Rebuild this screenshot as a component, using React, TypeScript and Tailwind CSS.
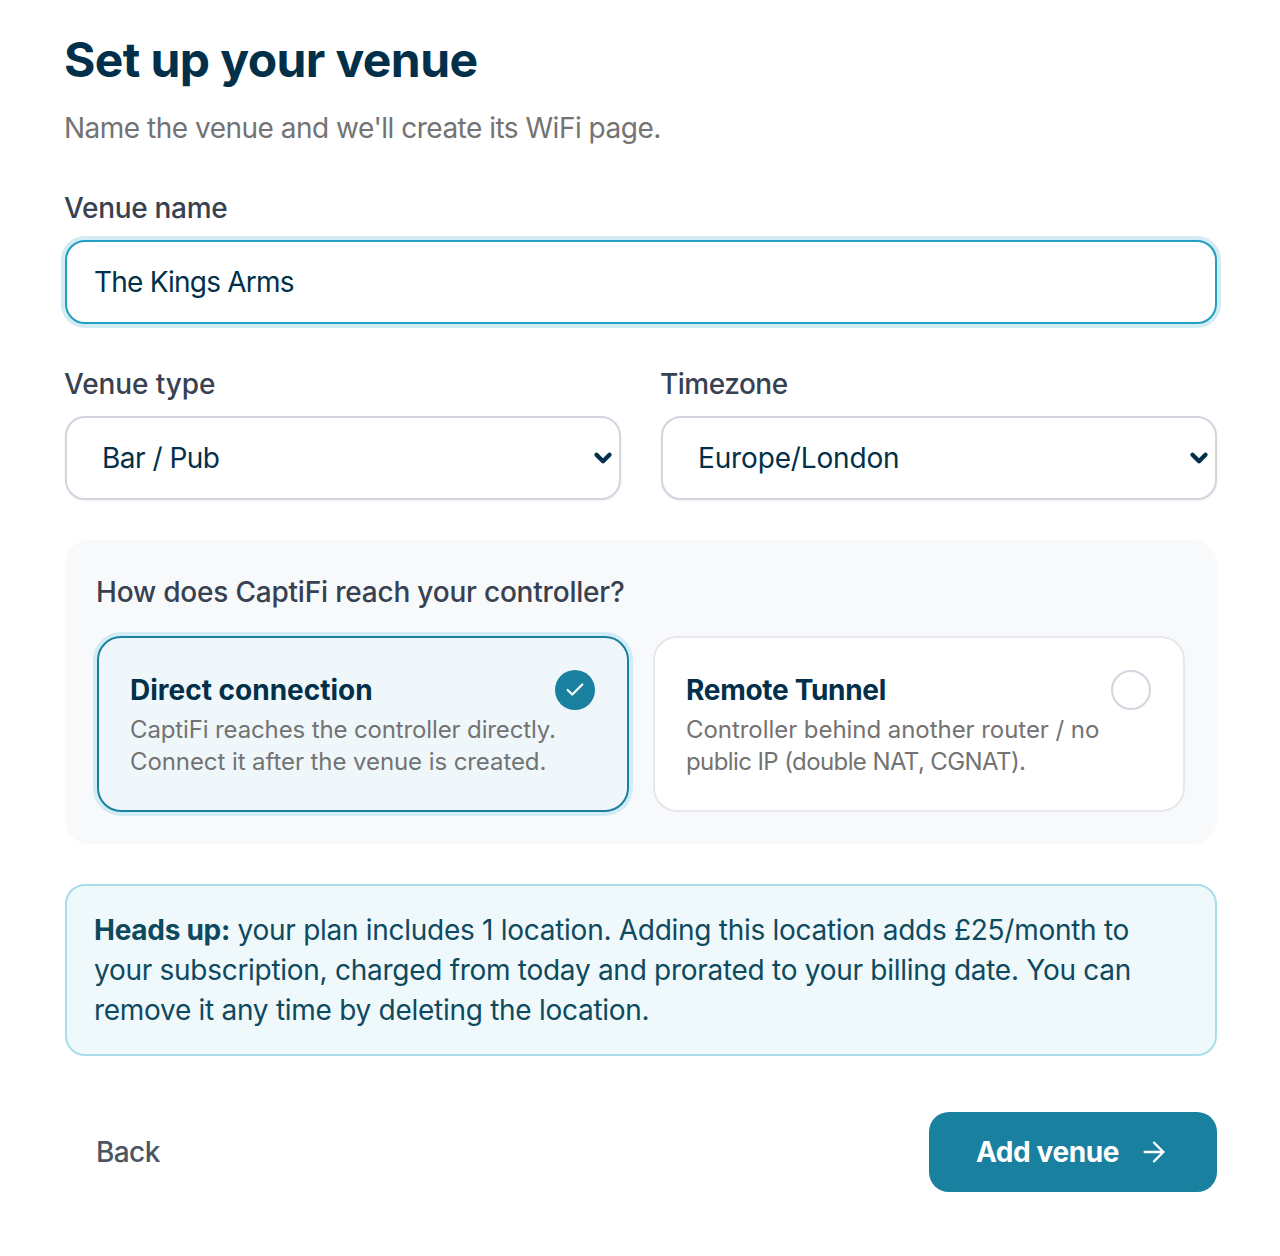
import { ArrowRight, Check, ChevronDown } from "lucide-react";

type CardLine = {
  text: string;
  spacing: string;
};

type OptionCardProps = {
  title: string;
  titleSpacing: string;
  lines: CardLine[];
  selected?: boolean;
};

function OptionCard({ title, titleSpacing, lines, selected }: OptionCardProps) {
  return (
    <div
      className={`relative flex-1 h-[176px] rounded-[24px] border-2 pl-[31px] pt-[34px] ${
        selected
          ? "bg-[#eff7fa] border-[#1a80a0] shadow-[0_0_0_4px_#d3ebf3]"
          : "bg-white border-[#e5e7eb]"
      }`}
    >
      <p className={`text-[28px] leading-[36px] font-bold text-[#02304a] mb-[6px] ${titleSpacing}`}>{title}</p>
      {lines.map((line) => (
        <p key={line.text} className={`text-[24px] leading-[32px] text-[#737373] whitespace-nowrap ${line.spacing}`}>
          {line.text}
        </p>
      ))}
      {selected ? (
        <span className="absolute right-[32px] top-[32px] w-[40px] h-[40px] rounded-full bg-[#1a80a0] flex items-center justify-center">
          <Check className="w-[22px] h-[22px] text-white" strokeWidth={2.4} />
        </span>
      ) : (
        <span className="absolute right-[32px] top-[32px] w-[40px] h-[40px] rounded-full border-2 border-[#d1d5e0]" />
      )}
    </div>
  );
}

type SelectFieldProps = {
  label: string;
  labelSpacing: string;
  value: string;
  spacing: string;
};

function SelectField({ label, labelSpacing, value, spacing }: SelectFieldProps) {
  return (
    <div className="flex-1">
      <label className={`block -ml-px text-[28px] leading-[36px] font-medium text-[#374151] mb-[14px] ${labelSpacing}`}>{label}</label>
      <div className="relative">
        <select
          defaultValue={value}
          className={`w-full h-[84px] appearance-none rounded-[20px] border-2 border-[#d1d5e0] bg-white pl-[35px] text-[28px] text-[#02304a] shadow-[0_1px_3px_rgba(0,0,0,0.06)] ${spacing}`}
        >
          <option>{value}</option>
        </select>
        <ChevronDown
          className="absolute right-[5px] top-[29px] w-[26px] h-[26px] text-[#02304a] pointer-events-none"
          strokeWidth={4}
        />
      </div>
    </div>
  );
}

export default function App() {
  return (
    <div className="bg-white min-h-[1256px] w-[1280px] pl-[65px] pr-[63px] pt-[28px] font-['Inter',sans-serif]">
      <h1 className="-ml-px text-[48px] leading-[64px] font-bold text-[#02304a] tracking-[-0.6px]">Set up your venue</h1>
      <p className="-ml-px mt-[20px] text-[28px] leading-[32px] text-[#737373] tracking-[-0.5px]">
        Name the venue and we'll create its WiFi page.
      </p>

      <label className="block -ml-px mt-[46px] text-[28px] leading-[36px] font-medium text-[#374151] tracking-[-0.3px]">Venue name</label>
      <input
        readOnly
        value="The Kings Arms"
        className="mt-[14px] block w-full h-[84px] rounded-[20px] border-2 border-[#22a0bf] bg-white px-[27px] text-[28px] text-[#02304a] tracking-[-0.8px] outline-none shadow-[0_0_0_4px_#d3ebf3]"
      />

      <div className="mt-[42px] flex gap-[40px]">
        <SelectField label="Venue type" labelSpacing="tracking-[-0.1px]" value="Bar / Pub" spacing="tracking-[-0.5px]" />
        <SelectField label="Timezone" labelSpacing="tracking-[-0.5px]" value="Europe/London" spacing="tracking-[-0.15px]" />
      </div>

      <div className="mt-[40px] h-[304px] rounded-[24px] bg-[#f8f9fb] p-[32px]">
        <p className="-ml-px text-[28px] leading-[40px] font-medium text-[#374151] tracking-[-0.2px]">How does CaptiFi reach your controller?</p>
        <div className="mt-[24px] flex gap-[24px]">
          <OptionCard
            selected
            title="Direct connection"
            titleSpacing="tracking-normal"
            lines={[
              { text: "CaptiFi reaches the controller directly.", spacing: "tracking-[-0.13px]" },
              { text: "Connect it after the venue is created.", spacing: "tracking-[-0.08px]" },
            ]}
          />
          <OptionCard
            title="Remote Tunnel"
            titleSpacing="tracking-[-0.3px]"
            lines={[
              { text: "Controller behind another router / no", spacing: "tracking-[-0.05px]" },
              { text: "public IP (double NAT, CGNAT).", spacing: "tracking-[-0.6px]" },
            ]}
          />
        </div>
      </div>

      <div className="mt-[40px] h-[172px] rounded-[20px] border-2 border-[#a8dde9] bg-[#eff8fb] pl-[27px] pr-[70px] pt-[24px] text-[28px] leading-[40px] text-[#0e4a5f] tracking-[-0.28px]">
        <p>
          <span className="font-bold">Heads up:</span> your plan includes 1 location. Adding this location adds £25/month to your subscription, charged from today and prorated to your billing date. You can remove it any time by deleting the location.
        </p>
      </div>

      <div className="mt-[56px] flex items-center justify-between">
        <button className="pl-[31px] text-[28px] font-medium text-[#4b5563] tracking-[-0.6px]">Back</button>
        <button className="w-[288px] h-[80px] rounded-[20px] bg-[#1a80a0] flex items-center justify-center gap-[19px] text-[28px] font-bold text-white tracking-[-0.4px]">
          Add venue
          <ArrowRight className="w-[32px] h-[32px]" strokeWidth={1.75} />
        </button>
      </div>
    </div>
  );
}
